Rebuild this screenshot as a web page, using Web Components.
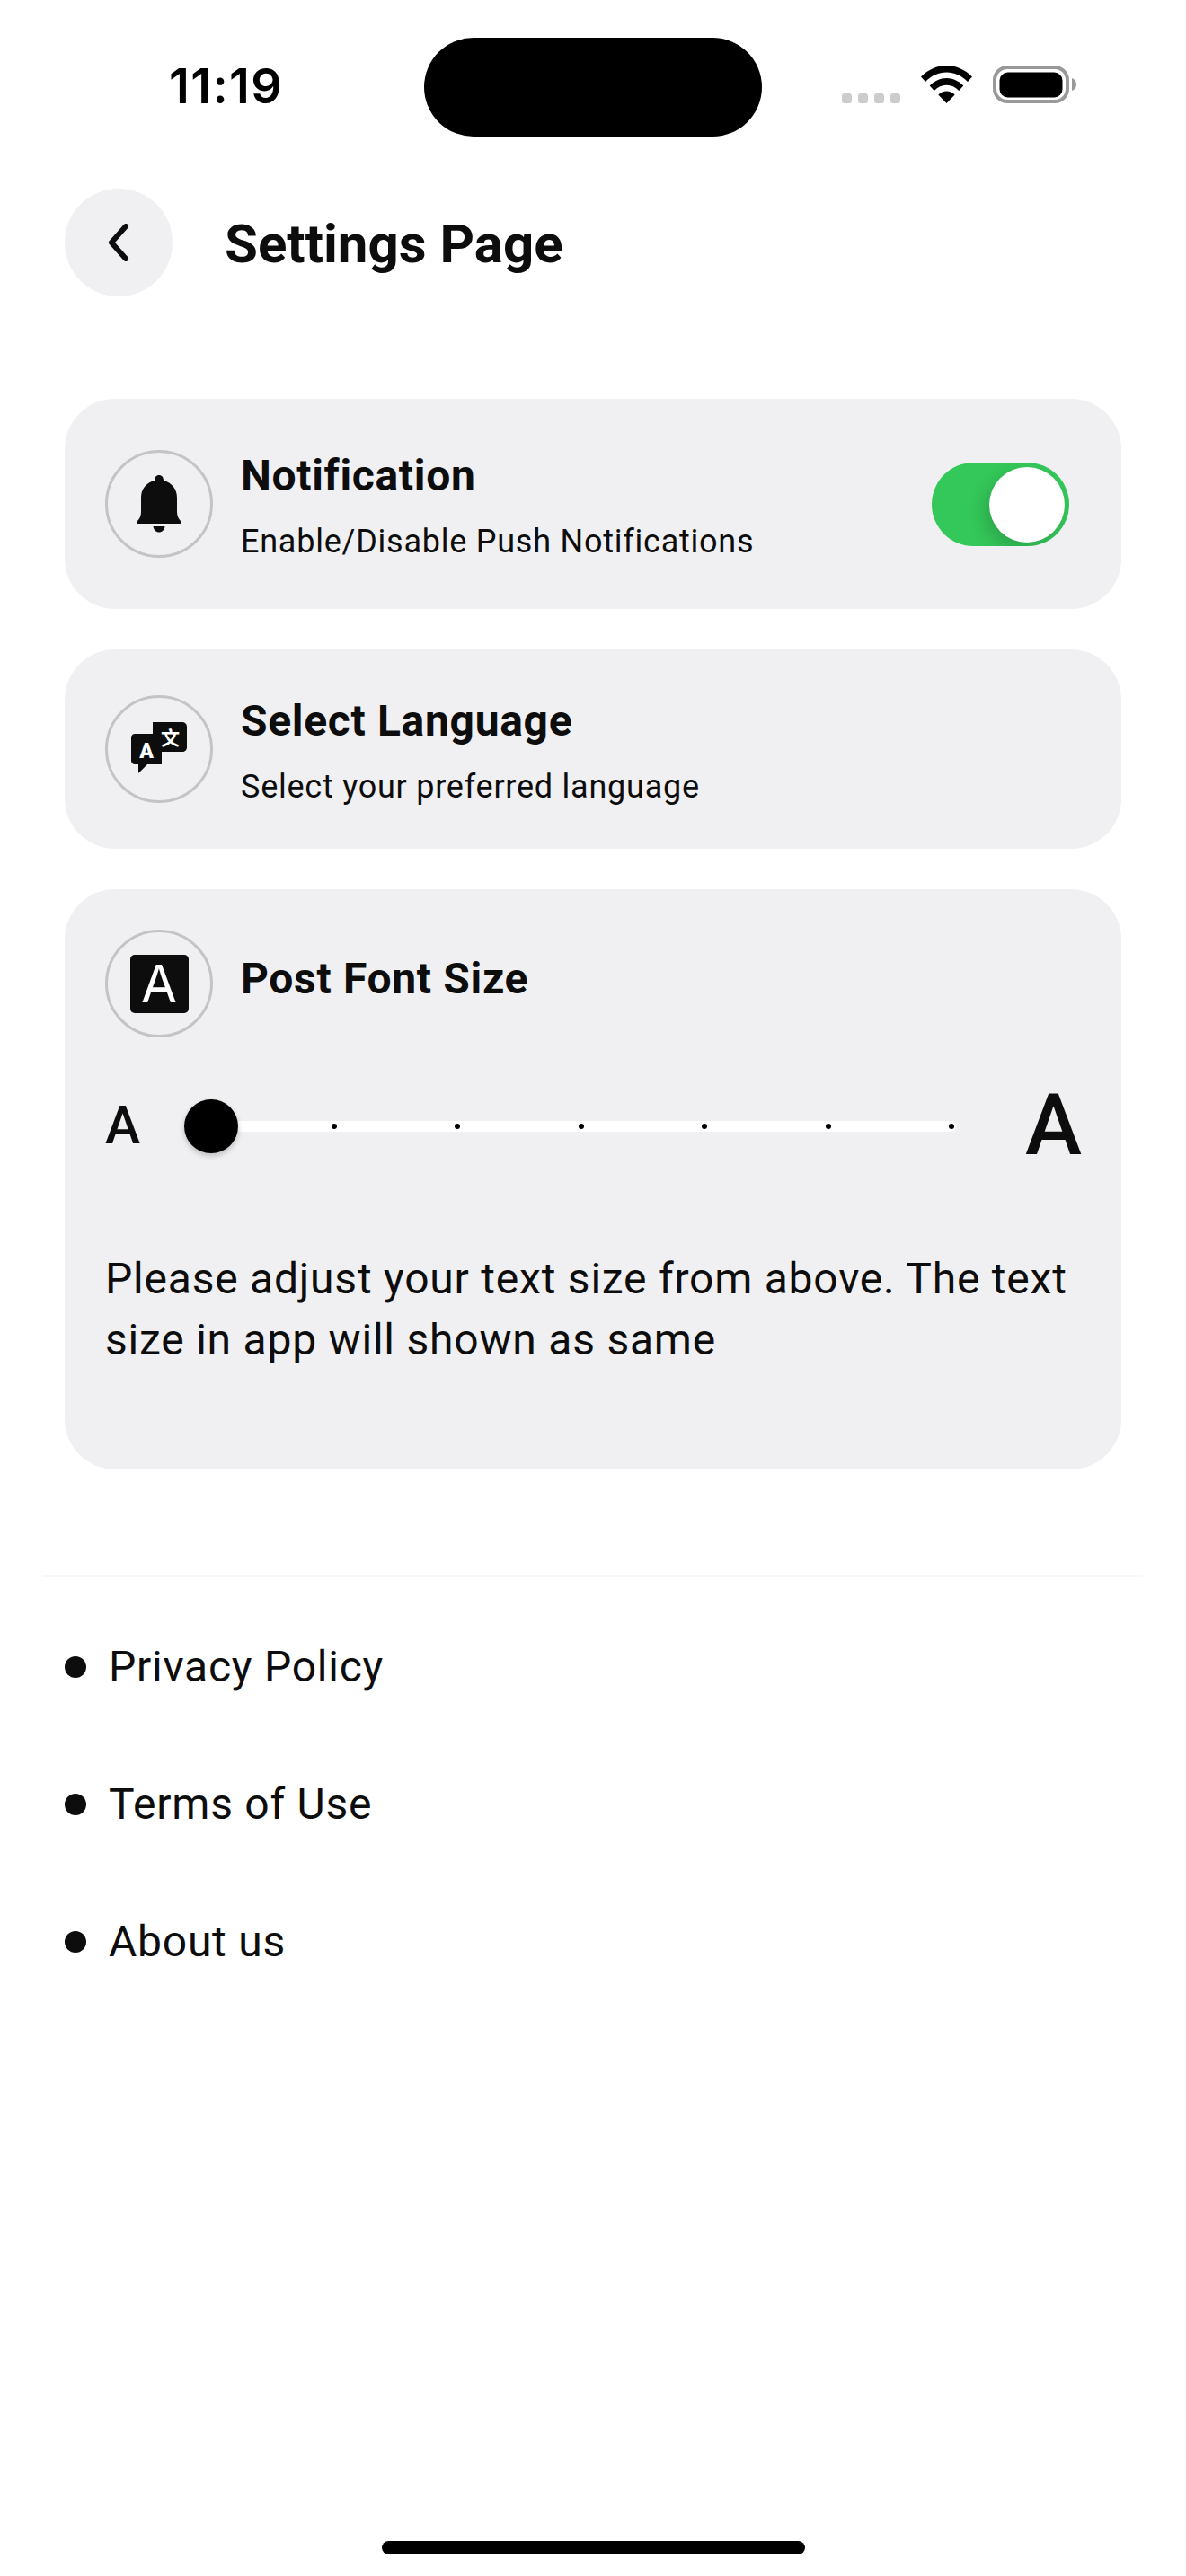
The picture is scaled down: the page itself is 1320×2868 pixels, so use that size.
<!DOCTYPE html>
<html lang="en"><head><meta charset="utf-8"><title>Settings Page</title>
<style>
html,body{margin:0;padding:0;background:#fff}
body{font-family:Roboto,"Liberation Sans",sans-serif;color:#0d0d0d}
</style></head><body>
<app-screen>
  <status-bar></status-bar>
  <page-header>Settings Page</page-header>
  <main-stack>
    <setting-card pad="57" height="234" top="0">
      <icon-circle slot="icon" kind="bell"></icon-circle>
      <span slot="title">Notification</span>
      <span slot="sub">Enable/Disable Push Notifications</span>
      <toggle-switch slot="end"></toggle-switch>
    </setting-card>
    <setting-card pad="51" height="222">
      <icon-circle slot="icon" kind="lang"></icon-circle>
      <span slot="title">Select Language</span>
      <span slot="sub">Select your preferred language</span>
    </setting-card>
    <font-card>
      <icon-circle slot="icon" kind="font"></icon-circle>
      <span slot="title">Post Font Size</span>
      <font-slider slot="slider"></font-slider>
      <span slot="note">Please adjust your text size from above. The text size in app will shown as same</span>
    </font-card>
  </main-stack>
  <link-list>
    <link-item>Privacy Policy</link-item>
    <link-item>Terms of Use</link-item>
    <link-item>About us</link-item>
  </link-list>
  <home-indicator></home-indicator>
</app-screen>
<script>
function def(name,html,setup){
  customElements.define(name,class extends HTMLElement{
    constructor(){super();this.attachShadow({mode:'open'}).innerHTML=html;}
    connectedCallback(){if(setup)setup(this,this.shadowRoot);}
  });
}
def('app-screen',`<style>:host{display:flex;flex-direction:column;width:1320px;height:2868px;position:relative;overflow:hidden;background:#fff}</style><slot></slot>`);
def('status-bar',`<style>
:host{display:block;height:210px;flex:none}
.row{display:flex;align-items:flex-start;height:210px}
.time{width:472px;box-sizing:border-box;padding:70px 0 0 188px;font:600 54px/52px Inter,"Liberation Sans",sans-serif;color:#000;letter-spacing:1.4px}
.island{width:376px;height:110px;margin-top:42px;border-radius:55px;background:#000;flex:none}
.right{display:flex;align-items:flex-start;margin:73px 0 0 89px}
.dots{display:flex;gap:7px;margin:31px 0 0 0}
.dots i{width:11px;height:11px;border-radius:3px;background:#ccc;display:block}
svg{display:block}
.wifi{margin-left:23px}
.bat{margin-left:23px}
</style><div class="row"><div class="time">11:19</div><div class="island"></div><div class="right">
<div class="dots"><i></i><i></i><i></i><i></i></div>
<svg class="wifi" width="57" height="42" viewBox="0 0 57 42"><path d="M28.5 0C18 0 8.200 4.200 0 12.500L5 18C11.700 11 19.800 7.500 28.500 7.500S45.300 11 52 18L57 12.500C48.800 4.200 39 0 28.500 0Z"/><path d="M28.500 14C21.500 14 15 17 9.700 22.500L14.800 28C18.700 24 23.300 21.800 28.500 21.800S38.300 24 42.200 28L47.300 22.500C42 17 35.500 14 28.500 14Z"/><path d="M28.500 28.500C25 28.500 21.800 30 19.300 32.500L28.500 42L37.700 32.500C35.200 30 32 28.500 28.500 28.500Z"/></svg>
<svg class="bat" width="93" height="42" viewBox="0 0 93 42"><rect x="2" y="2" width="81" height="38" rx="14" fill="none" stroke="#999" stroke-width="4"/><rect x="7.500" y="7.500" width="70" height="28" rx="9"/><path d="M88 14C91 14.800 93 17.500 93 21S91 27.200 88 28Z" fill="#999"/></svg>
</div></div>`);
def('page-header',`<style>
:host{display:flex;align-items:center;height:120px;flex:none;padding-left:72px;gap:58px}
.b{width:120px;height:120px;border-radius:50%;background:#f0f0f2;display:flex;align-items:center;justify-content:center;flex:none}
.t{font:700 60px/120px Roboto,sans-serif;color:#0d0d0d;padding-top:4px}
</style><div class="b"><svg width="26" height="42" viewBox="0 0 26 42"><path d="M21 3L5 21L21 39" fill="none" stroke="#0d0d0d" stroke-width="6" stroke-linecap="round" stroke-linejoin="round"/></svg></div><div class="t"><slot></slot></div>`);
def('main-stack',`<style>:host{display:flex;flex-direction:column;gap:45px;margin:114px 72px 0;flex:none}</style><slot></slot>`);
def('setting-card',`<style>
:host{display:flex;align-items:flex-start;background:#f0f0f2;border-radius:56px;box-sizing:border-box;padding:var(--pad,51px) 58px 0 45px;height:var(--h,222px);flex:none}
.txt{flex:1;margin-left:31px;margin-top:-5px;min-width:0}
.t{font:700 48px/68px Roboto,sans-serif;color:#0d0d0d;letter-spacing:.67px}
.s{font:400 36px/52px Roboto,sans-serif;color:#0d0d0d;letter-spacing:.76px;margin-top:13px}
.e{align-self:center;margin-top:calc(var(--pad,51px) * -1)}
</style><slot name="icon"></slot><div class="txt"><div class="t"><slot name="title"></slot></div><div class="s"><slot name="sub"></slot></div></div><div class="e"><slot name="end"></slot></div>`,(el)=>{
  el.style.setProperty('--pad',el.getAttribute('pad')+'px');
  el.style.setProperty('--h',el.getAttribute('height')+'px');
});
def('font-card',`<style>
:host{display:block;background:#f0f0f2;border-radius:56px;box-sizing:border-box;padding:45px 45px 0;height:646px;flex:none}
.h{display:flex;align-items:flex-start}
.t{font:700 48px/68px Roboto,sans-serif;color:#0d0d0d;letter-spacing:.67px;margin:21px 0 0 31px}
.n{font:400 48px/68px Roboto,sans-serif;color:#0d0d0d;letter-spacing:.78px;margin-top:88px}
</style><div class="h"><slot name="icon"></slot><div class="t"><slot name="title"></slot></div></div><slot name="slider"></slot><div class="n"><slot name="note"></slot></div>`);
def('icon-circle',`<style>
:host{display:flex;align-items:center;justify-content:center;width:120px;height:120px;box-sizing:border-box;border:3px solid #c4c4c4;border-radius:50%;flex:none}
svg{display:block}
.sq{width:65px;height:65px;background:#0d0d0d;border-radius:5px;color:#fff;font:400 58px/65px Inter,Roboto,sans-serif;text-align:center}
</style><div id="c"></div>`,(el,sr)=>{
  const k=el.getAttribute('kind'),c=sr.getElementById('c');
  if(k==='bell')c.innerHTML=`<svg width="50" height="64" viewBox="0 0 50 64"><path fill="#0d0d0d" d="M25 0C22 0 20 2.200 20 6C11 8.500 5 15 5 25V41C5 45.500 3 49 1 51C-.8 53 .2 54 2.500 54H47.500C49.800 54 50.800 53 49 51C47 49 45 45.500 45 41V25C45 15 39 8.500 30 6C30 2.200 28 0 25 0Z"/><path fill="#0d0d0d" d="M18.500 57H31.500C31 61 28.500 63.500 25 63.500S19 61 18.500 57Z"/></svg>`;
  if(k==='lang')c.innerHTML=`<svg width="62" height="58" viewBox="0 0 62 58" style="margin:-3px 0 0 -1px"><path fill="#0d0d0d" d="M24 0H57C59.800 0 62 2.200 62 5V28C62 31 59.800 33 57 33H34V14H24Z"/><path fill="#0d0d0d" d="M4 13H34V47H18L8 57V47H4C1.800 47 0 45 0 43V17C0 15 1.800 13 4 13Z"/><text x="17" y="39.500" text-anchor="middle" font-family="Roboto,sans-serif" font-weight="900" font-size="23" fill="#fff">A</text><text x="43.500" y="25" text-anchor="middle" font-family="'Noto Sans CJK SC',sans-serif" font-weight="700" font-size="21" fill="#fff">文</text></svg>`;
  if(k==='font')c.innerHTML=`<div class="sq">A</div>`;
});
def('toggle-switch',`<style>
:host{display:block;width:153px;height:93px;border-radius:47px;background:#34c759;position:relative;overflow:hidden}
.k{position:absolute;left:64px;top:5px;width:84px;height:84px;border-radius:50%;background:#fff;box-shadow:-6px 8px 18px rgba(0,0,0,.16)}
</style><div class="k"></div>`);
def('font-slider',`<style>
:host{display:flex;align-items:center;height:96px;margin-top:51px;position:relative;font-family:Roboto,sans-serif;color:#0d0d0d}
.a{font-weight:500;font-size:59px;line-height:96px;width:88px;flex:none;margin-top:-2px}
.A{font-weight:500;font-size:95px;line-height:96px;margin-left:76px;flex:none;margin-top:-2px}
.tr{width:830px;height:12px;background:#fff;border-radius:6px;position:relative;flex:none;box-sizing:border-box;margin-left:30px}
.th{position:absolute;left:-30px;top:-24px;width:60px;height:60px;border-radius:50%;background:#000;box-shadow:0 3px 6px rgba(0,0,0,.22)}
.d{position:absolute;display:flex;justify-content:space-between;left:134px;top:3px;width:693px}
.d i{display:block;width:6px;height:6px;border-radius:50%;background:#000}
</style><div class="a">A</div><div class="tr"><div class="d"><i></i><i></i><i></i><i></i><i></i><i></i></div><div class="th"></div></div><div class="A">A</div>`);
def('link-list',`<style>
:host{display:flex;flex-direction:column;margin:117px 48px 0 47px;padding:0 0 0 25px;border-top:3px solid #f8f8f8;flex:none}
::slotted(link-item){height:153px}
</style><slot></slot>`);
def('link-item',`<style>
:host{display:flex;align-items:center;gap:25px;font:400 48px/68px Roboto,sans-serif;letter-spacing:.75px;color:#0d0d0d}
i{display:block;width:24px;height:24px;border-radius:50%;background:#0d0d0d;flex:none}
:host(:first-child){margin-top:23px}
</style><i></i><slot></slot>`);
def('home-indicator',`<style>:host{position:absolute;left:425px;bottom:24px;width:471px;height:15px;border-radius:8px;background:#000}</style>`);
</script>
</body></html>
